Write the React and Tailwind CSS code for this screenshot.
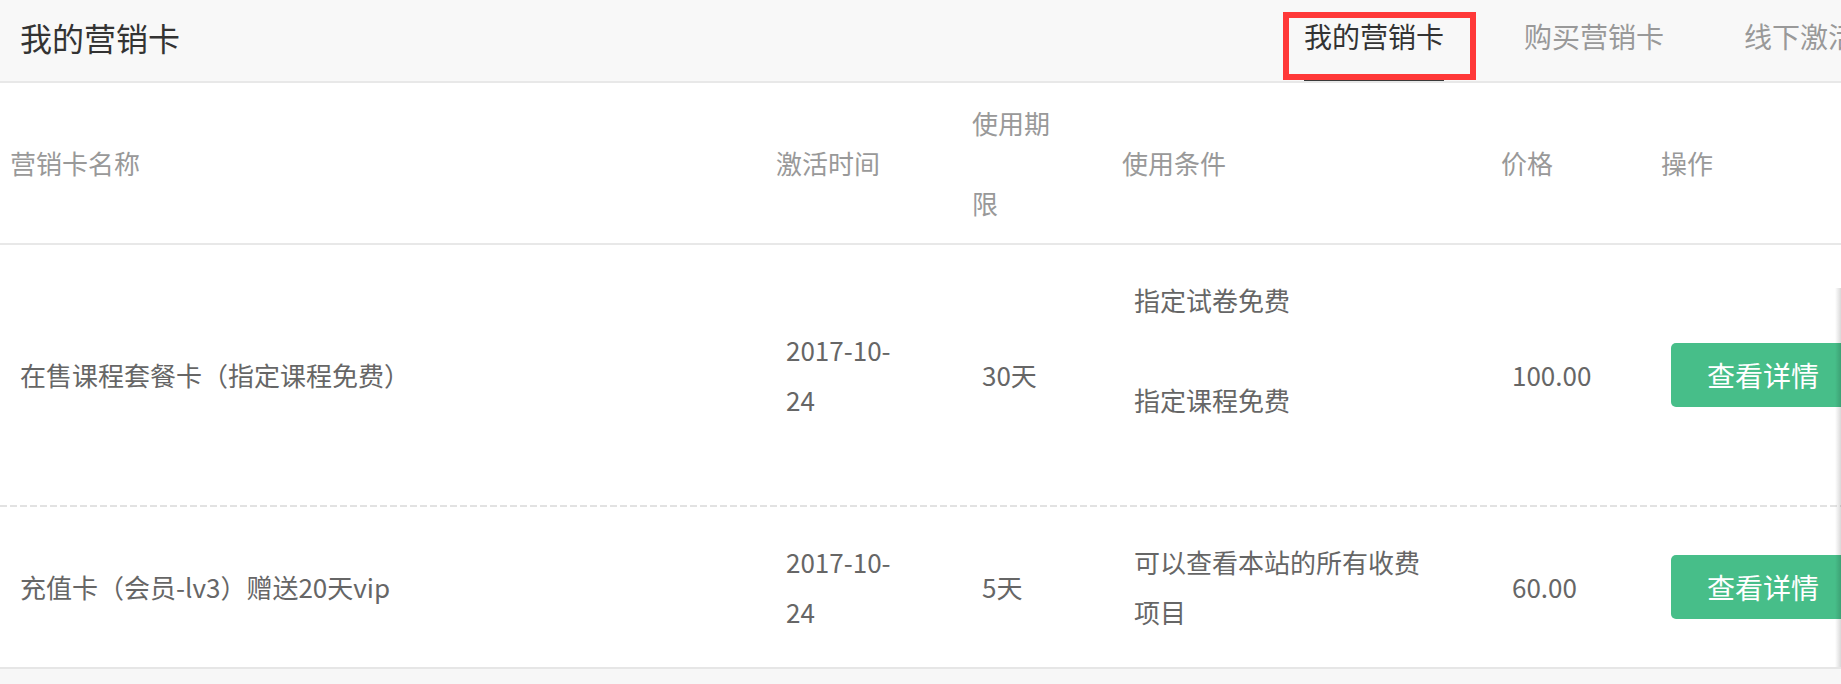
import React from 'react';

const tabs = ['我的营销卡', '购买营销卡', '线下激活'];

const cards = [
  {
    name: '在售课程套餐卡（指定课程免费）',
    date: ['2017-10-', '24'],
    days: '30天',
    conditions: ['指定试卷免费', '指定课程免费'],
    price: '100.00',
    height: 'h-[260px]',
  },
  {
    name: '充值卡（会员-lv3）赠送20天vip',
    date: ['2017-10-', '24'],
    days: '5天',
    conditions: ['可以查看本站的所有收费项目'],
    price: '60.00',
    height: 'h-[160px]',
  },
];

function Header() {
  return (
    <div className="flex h-[83px] shrink-0 border-b-2 border-[#e8e8e8] bg-[#f8f8f8]">
      <div className="w-[1304px] shrink-0 pl-5 pt-[17px] text-[32px] leading-[40px] text-[#333]">
        我的营销卡
      </div>
      <div className="flex shrink-0 gap-[80px]">
        {tabs.map((tab, i) => (
          <div
            key={tab}
            className={`relative h-[81px] shrink-0 whitespace-nowrap pt-[16px] text-[28px] leading-[40px] ${
              i === 0 ? 'text-[#333]' : 'text-[#999]'
            }`}
          >
            {tab}
            {i === 0 && (
              <>
                <div className="absolute bottom-0 left-0 right-0 h-[2px] bg-[#3a3a3a]" />
                <div className="absolute left-[-21px] top-[12px] h-[68px] w-[193px] border-[6px] border-[#ff3838]" />
              </>
            )}
          </div>
        ))}
      </div>
    </div>
  );
}

function TableHead() {
  return (
    <div className="flex h-[162px] items-center border-b-2 border-[#e8e8e8] text-[26px] leading-[80px] text-[#999]">
      <div className="w-[766px] shrink-0 pl-[10px]">营销卡名称</div>
      <div className="w-[196px] shrink-0 pl-[10px]">激活时间</div>
      <div className="w-[150px] shrink-0 pl-[10px]">
        <div className="w-[90px]">使用期限</div>
      </div>
      <div className="w-[379px] shrink-0 pl-[10px]">使用条件</div>
      <div className="w-[160px] shrink-0 pl-[10px]">价格</div>
      <div className="shrink-0 pl-[10px]">操作</div>
    </div>
  );
}

function Row({ card, last }) {
  return (
    <div
      className={`flex shrink-0 items-center text-[26px] leading-[50px] text-[#666] ${card.height} ${
        last ? '' : 'border-b-0'
      }`}
    >
      <div className="w-[766px] shrink-0 pl-5">{card.name}</div>
      <div className="w-[196px] shrink-0 pl-5">
        {card.date[0]}
        <br />
        {card.date[1]}
      </div>
      <div className="w-[150px] shrink-0 pl-5">{card.days}</div>
      <div className="w-[379px] shrink-0 self-start pl-[22px] pt-[30px]">
        <div className="w-[300px] space-y-[50px]">
          {card.conditions.map((c) => (
            <p key={c}>{c}</p>
          ))}
        </div>
      </div>
      <div className="w-[160px] shrink-0 pl-[21px]">{card.price}</div>
      <div className="shrink-0 pl-5">
        <button className="h-[64px] whitespace-nowrap rounded-[5px] bg-[#47be89] px-[36px] text-[28px] leading-[64px] text-white">
          查看详情
        </button>
      </div>
    </div>
  );
}

export default function App() {
  return (
    <div className="relative flex h-[684px] w-[1841px] flex-col overflow-hidden bg-[#f7f7f7] font-['Noto_Sans_CJK_SC','Microsoft_YaHei',sans-serif]">
      <Header />
      <div className="shrink-0 border-b-2 border-[#e6e6e6] bg-white">
        <TableHead />
        <Row card={cards[0]} />
        <div className="h-[2px] bg-[repeating-linear-gradient(90deg,#e2e2e2_0_7px,transparent_7px_10px)]" />
        <Row card={cards[1]} last />
      </div>
      <div className="pointer-events-none absolute right-0 top-[288px] h-[379px] w-[6px] bg-gradient-to-r from-transparent to-black/15" />
    </div>
  );
}
